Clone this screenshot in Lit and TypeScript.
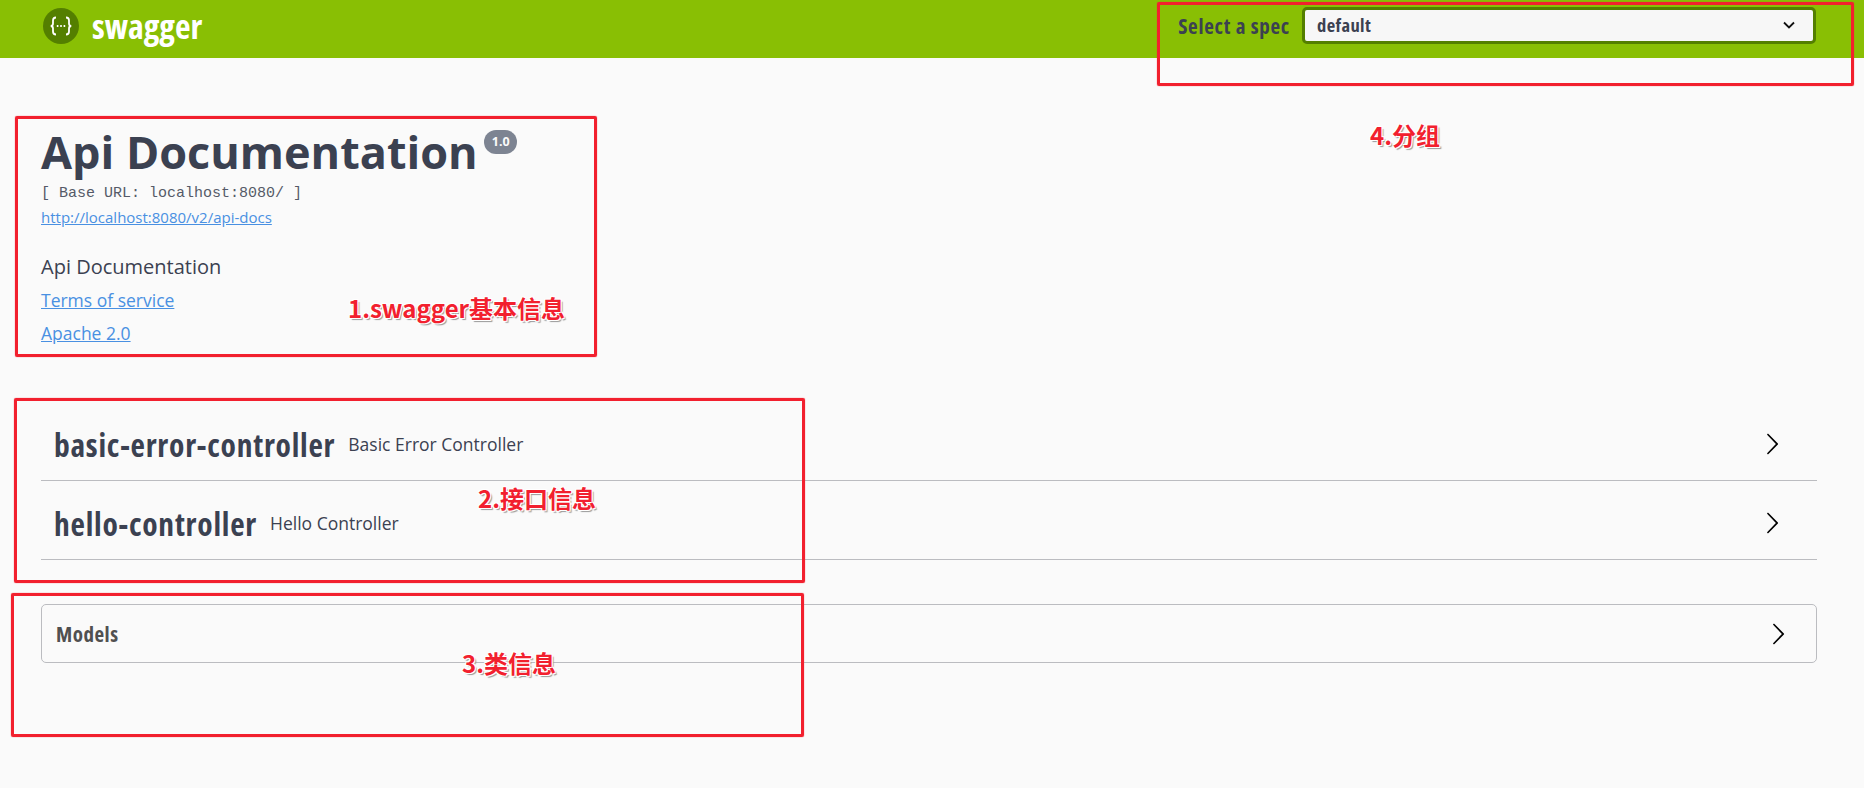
import { LitElement, html, css } from 'lit';
import { customElement } from 'lit/decorators.js';

const arrow = html`<svg class="arrow" viewBox="0 0 20 20" width="24" height="24">
  <path d="M13.25 10L6.109 2.58c-.268-.27-.268-.707 0-.979.268-.27.701-.27.969 0l7.83 7.908c.268.271.268.709 0 .979l-7.83 7.908c-.268.271-.701.27-.969 0-.268-.269-.268-.707 0-.979L13.25 10z"></path>
</svg>`;

@customElement('app-root')
export class AppRoot extends LitElement {
  static styles = css`
    :host {
      background: #fafafa;
      color: #3b4151;
      display: block;
      font-family: "Open Sans", sans-serif;
      height: 788px;
      overflow: hidden;
      position: relative;
    }

    .topbar {
      align-items: flex-start;
      background: #89bf04;
      box-sizing: border-box;
      display: flex;
      height: 58px;
      padding: 7px 48px 0 43px;
    }

    .logo {
      align-items: center;
      color: #fff;
      display: flex;
      font-size: 34px;
      font-stretch: 75%;
      font-weight: 700;
      gap: 13px;
      height: 37px;
    }

    .spec {
      align-items: center;
      display: flex;
      gap: 12px;
      margin-left: auto;
    }

    .spec label {
      font-size: 21px;
      font-stretch: 75%;
      font-weight: 700;
      letter-spacing: 0.75px;
    }

    .select {
      align-items: center;
      background: #f7f7f7;
      border: 3px solid #547f00;
      border-radius: 5px;
      box-sizing: border-box;
      display: flex;
      font-size: 18.5px;
      font-stretch: 75%;
      font-weight: 700;
      height: 37px;
      justify-content: space-between;
      letter-spacing: 0.4px;
      padding: 0 18px 2px 12px;
      width: 514px;
    }

    main {
      padding: 0 47px 0 41px;
    }

    .info {
      padding-top: 67px;
    }

    h1 {
      font-size: 45px;
      font-weight: 700;
      line-height: 54px;
      margin: 0;
    }

    .badge {
      background: #7d8492;
      border-radius: 12px;
      color: #fafafa;
      display: inline-block;
      font-size: 12.5px;
      line-height: 24px;
      margin-left: -5px;
      position: relative;
      text-align: center;
      top: -23px;
      width: 33px;
    }

    .base {
      color: #555a68;
      font-family: "Liberation Mono", monospace;
      font-size: 15px;
      line-height: 20px;
      margin-top: 5px;
    }

    a {
      color: #4990e2;
      display: block;
      text-decoration: underline;
    }

    .url {
      font-size: 15px;
      line-height: 20px;
      margin-top: 3px;
    }

    .desc {
      font-size: 20px;
      line-height: 24px;
      margin-top: 28px;
    }

    .link {
      font-size: 17.5px;
      line-height: 24px;
      margin-top: 9px;
    }

    .tags {
      margin-top: 57px;
    }

    .tag {
      align-items: center;
      border-bottom: 1px solid #bbbcc0;
      display: flex;
      height: 72px;
      padding: 6px 33px 0 13px;
    }

    .tag b {
      font-size: 31.5px;
      font-stretch: 75%;
      font-weight: 700;
      letter-spacing: 0.75px;
      margin-right: 13px;
    }

    .tag span {
      font-size: 17.5px;
    }

    .arrow {
      margin-left: auto;
    }

    .models {
      align-items: center;
      border: 1px solid #bbbcc0;
      border-radius: 5px;
      box-sizing: border-box;
      color: #505050;
      display: flex;
      font-size: 21px;
      font-stretch: 75%;
      font-weight: 700;
      height: 59px;
      letter-spacing: 0.5px;
      margin-top: 44px;
      padding: 0 26px 0 14px;
    }

    .box {
      border: 3px solid #f2202e;
      border-radius: 2px;
      box-shadow: 0 0 1px #f2202e;
      box-sizing: border-box;
      position: absolute;
    }

    .note {
      color: #f2202e;
      font-family: "Noto Sans CJK SC", sans-serif;
      font-size: 24px;
      font-weight: 700;
      line-height: 30px;
      position: absolute;
      text-shadow: 1px 1px 0 #fff, -1px -1px 0 #fff, 1px -1px 0 #fff, -1px 1px 0 #fff, 2px 2px 1px #999;
      white-space: nowrap;
    }

    .b1 { height: 241px; left: 15px; top: 116px; width: 582px; }
    .b2 { height: 185px; left: 14px; top: 398px; width: 791px; }
    .b3 { height: 144px; left: 11px; top: 593px; width: 793px; }
    .b4 { height: 84px; left: 1157px; top: 2px; width: 697px; }
    .n1 { left: 348px; top: 293px; }
    .n2 { left: 478px; top: 483px; }
    .n3 { left: 462px; top: 648px; }
    .n4 { left: 1370px; top: 120px; }
  `;

  render() {
    return html`
      <header class="topbar">
        <div class="logo">
          <svg width="36" height="36" viewBox="0 0 36 36">
            <circle cx="18" cy="18" r="18" fill="#547f00"></circle>
            <path d="M13 9.5c-2.5 0-3 1-3 3v3c0 1.500-.8 2.500-2.300 2.500 1.500 0 2.300 1 2.300 2.500v3c0 2 .5 3 3 3M23 9.500c2.500 0 3 1 3 3v3c0 1.500.8 2.500 2.300 2.500-1.500 0-2.300 1-2.300 2.500v3c0 2-.5 3-3 3" fill="none" stroke="#fff" stroke-width="1.800"></path>
            <path d="M13.800 18h1.600M17.200 18h1.600M20.600 18h1.600" stroke="#fff" stroke-width="1.800"></path>
          </svg>
          swagger
        </div>
        <div class="spec">
          <label>Select a spec</label>
          <div class="select">
            default
            <svg width="12" height="8" viewBox="0 0 12 8"><path d="M1 1.500l5 5 5-5" fill="none" stroke="#111" stroke-width="1.800"></path></svg>
          </div>
        </div>
      </header>

      <main>
        <section class="info">
          <h1>Api Documentation <span class="badge">1.0</span></h1>
          <div class="base">[ Base URL: localhost:8080/ ]</div>
          <a class="url">http://localhost:8080/v2/api-docs</a>
          <div class="desc">Api Documentation</div>
          <a class="link">Terms of service</a>
          <a class="link">Apache 2.0</a>
        </section>

        <section class="tags">
          <div class="tag"><b>basic-error-controller</b><span>Basic Error Controller</span>${arrow}</div>
          <div class="tag"><b>hello-controller</b><span>Hello Controller</span>${arrow}</div>
        </section>

        <section class="models">Models ${arrow}</section>
      </main>

      <div class="box b1"></div>
      <div class="box b2"></div>
      <div class="box b3"></div>
      <div class="box b4"></div>
      <div class="note n1">1.swagger基本信息</div>
      <div class="note n2">2.接口信息</div>
      <div class="note n3">3.类信息</div>
      <div class="note n4">4.分组</div>
    `;
  }
}
